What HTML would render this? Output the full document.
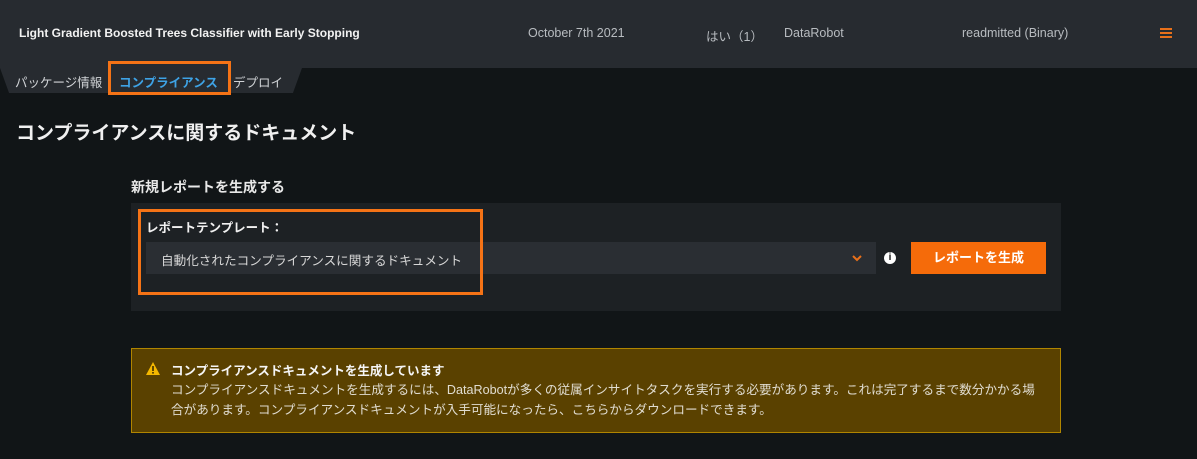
<!DOCTYPE html>
<html><head><meta charset="utf-8"><style>
*{margin:0;padding:0;box-sizing:border-box}
body{width:1197px;height:459px;background:#111517;font-family:"Liberation Sans","Noto Sans CJK JP",sans-serif;color:#e6e6e6;position:relative;overflow:hidden}
.hdr{position:absolute;left:0;top:0;width:1197px;height:68px;background:#272b30}
.t{position:absolute;white-space:nowrap}
.strip{position:absolute;left:0;top:68px;width:302px;height:25px;background:#272b30;clip-path:polygon(0 0,100% 0,97% 100%,3% 100%)}
.box{position:absolute;border:3px solid #f57316}
</style></head><body>
<div class="hdr"></div>
<div class="t" style="left:19px;top:26px;font-size:12px;font-weight:bold;color:#f2f2f2">Light Gradient Boosted Trees Classifier with Early Stopping</div>
<div class="t" style="left:528px;top:26px;font-size:12.5px;color:#b8bcc0">October 7th 2021</div>
<div class="t" style="left:706px;top:26px;font-size:12.5px;color:#b8bcc0">はい（1）</div>
<div class="t" style="left:784px;top:26px;font-size:12.5px;color:#b8bcc0">DataRobot</div>
<div class="t" style="left:962px;top:26px;font-size:12.5px;color:#b8bcc0">readmitted (Binary)</div>
<div style="position:absolute;left:1160px;top:28px;width:12px;height:10px;border-top:2px solid #e8701a;border-bottom:2px solid #e8701a"><div style="margin-top:2px;height:2px;background:#e8701a"></div></div>
<div class="strip"></div>
<div class="t" style="left:15px;top:72px;font-size:12.5px;color:#d0d3d6">パッケージ情報</div>
<div class="t" style="left:119px;top:72px;font-size:12.5px;font-weight:bold;color:#3ea3e6">コンプライアンス</div>
<div class="t" style="left:233px;top:72px;font-size:12.5px;color:#d0d3d6">デプロイ</div>
<div class="box" style="left:108px;top:61px;width:123px;height:34px"></div>
<div class="t" style="left:16px;top:118px;font-size:19px;font-weight:bold;color:#f0f0f0">コンプライアンスに関するドキュメント</div>
<div class="t" style="left:131px;top:177px;font-size:14px;font-weight:bold;color:#e8e8e8">新規レポートを生成する</div>
<div style="position:absolute;left:131px;top:203px;width:930px;height:108px;background:#1d2124"></div>
<div class="t" style="left:146px;top:217px;font-size:12.5px;font-weight:bold;color:#f0f0f0">レポートテンプレート：</div>
<div style="position:absolute;left:146px;top:242px;width:730px;height:32px;background:#2a2e33"></div>
<div class="t" style="left:161px;top:250px;font-size:12.6px;color:#d8d8d8">自動化されたコンプライアンスに関するドキュメント</div>
<svg style="position:absolute;left:852px;top:254px" width="10" height="8"><path d="M1 2 L5 6 L9 2" stroke="#e8701a" stroke-width="2" fill="none"/></svg>
<div style="position:absolute;left:884px;top:252px;width:12px;height:12px;border-radius:50%;background:#fff;color:#111;font-size:10px;font-weight:bold;text-align:center;line-height:12px">i</div>
<div style="position:absolute;left:911px;top:242px;width:135px;height:32px;background:#f56b0a;color:#fff;font-size:13px;font-weight:bold;text-align:center;line-height:32px">レポートを生成</div>
<div class="box" style="left:138px;top:209px;width:345px;height:86px"></div>
<div style="position:absolute;left:131px;top:348px;width:930px;height:85px;background:#5a4100;border:1px solid #b08500"></div>
<svg style="position:absolute;left:146px;top:362px" width="14" height="13"><path d="M7 0 L14 13 L0 13 Z" fill="#f5b800"/><rect x="6.2" y="4" width="1.6" height="5" fill="#3a2a00"/><rect x="6.2" y="10" width="1.6" height="1.6" fill="#3a2a00"/></svg>
<div class="t" style="left:171px;top:360px;font-size:12.5px;font-weight:bold;color:#f5f5f5">コンプライアンスドキュメントを生成しています</div>
<div class="t" style="left:171px;top:380px;font-size:12.6px;line-height:20px;color:#e0dcd0">コンプライアンスドキュメントを生成するには、DataRobotが多くの従属インサイトタスクを実行する必要があります。これは完了するまで数分かかる場<br>合があります。コンプライアンスドキュメントが入手可能になったら、こちらからダウンロードできます。</div>
</body></html>
